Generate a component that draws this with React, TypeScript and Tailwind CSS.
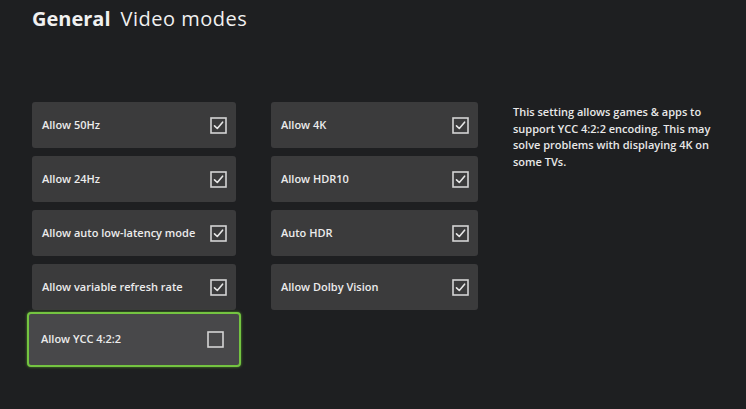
import React from "react";

function Check({ checked }: { checked: boolean }) {
  return (
    <svg width="17" height="17" viewBox="0 0 17 17" className="shrink-0">
      <rect x="1" y="1" width="15" height="15" fill="none" stroke="#d4d4d4" strokeWidth="1.6" />
      {checked && (
        <path d="M4.5 8.8 L7.3 11.5 L12.6 5.2" fill="none" stroke="#e6e6e6" strokeWidth="1.6" strokeLinecap="round" strokeLinejoin="round" />
      )}
    </svg>
  );
}

function Tile({ label, checked = true, focused = false }: { label: string; checked?: boolean; focused?: boolean }) {
  if (focused) {
    return (
      <div className="-mx-[5px] -mt-[6px] -mb-[3px] flex h-[55px] items-center justify-between rounded-[4px] border-[2px] border-[#74c441] bg-[#48484a] pl-[12px] pr-[15px] shadow-[0_0_3px_#4f8f2a]">
        <span className="text-[11px] font-semibold text-[#ececec]">{label}</span>
        <Check checked={checked} />
      </div>
    );
  }
  return (
    <div className="flex h-[46px] items-center justify-between rounded-[3px] bg-[#3b3b3c] pl-[10px] pr-[9px]">
      <span className="text-[11px] font-semibold text-[#ececec]">{label}</span>
      <Check checked={checked} />
    </div>
  );
}

export default function App() {
  return (
    <div
      className="h-[409px] w-[746px] overflow-hidden bg-[#1e1f21] pl-[32px] pt-[5px]"
      style={{ fontFamily: '"Open Sans", "Noto Sans", sans-serif' }}
    >
      <div className="flex items-baseline gap-[10px] text-[20px] leading-[28px] text-[#f0f0f0]">
        <span className="font-bold">General</span>
        <span className="font-normal tracking-[0.5px]">Video modes</span>
      </div>
      <div className="mt-[69px] flex">
        <div className="flex w-[204px] flex-col gap-[8px]">
          <Tile label="Allow 50Hz" />
          <Tile label="Allow 24Hz" />
          <Tile label="Allow auto low-latency mode" />
          <Tile label="Allow variable refresh rate" />
          <Tile label="Allow YCC 4:2:2" checked={false} focused />
        </div>
        <div className="ml-[35px] flex w-[207px] flex-col gap-[8px]">
          <Tile label="Allow 4K" />
          <Tile label="Allow HDR10" />
          <Tile label="Auto HDR" />
          <Tile label="Allow Dolby Vision" />
        </div>
        <div className="ml-[35px] w-[200px] pt-[2px] text-[11px] font-semibold leading-[16.5px] text-[#e8e8e8]">
          This setting allows games &amp; apps to support YCC 4:2:2 encoding. This may solve problems with displaying 4K on some TVs.
        </div>
      </div>
    </div>
  );
}
